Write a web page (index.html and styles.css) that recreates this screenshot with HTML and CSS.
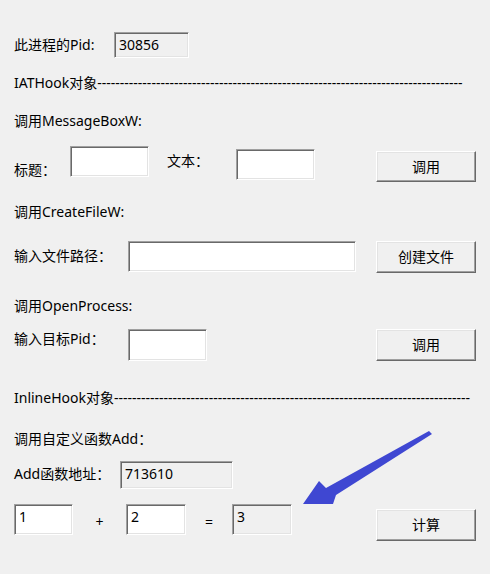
FILE: index.html
```html
<!DOCTYPE html>
<html lang="zh-CN">
<head>
<meta charset="utf-8">
<title>Hook Demo</title>
<link rel="stylesheet" href="styles.css">
</head>
<body>
<div class="dlg">
  <div class="row r1">
    <div class="lbl w100 mt3">此进程的Pid:</div>
    <div class="edit ro pid">30856</div>
  </div>
  <div class="row r2">
    <div class="lbl sep">IATHook对象---------------------------------------------------------------------------------</div>
  </div>
  <div class="row r3">
    <div class="lbl">调用MessageBoxW:</div>
  </div>
  <div class="row r4">
    <div class="lbl w56 mt14">标题：</div>
    <div class="edit e79 h31"></div>
    <div class="lbl w69 mt5 ml18">文本：</div>
    <div class="edit e79 h31 mt3"></div>
    <div class="btn h31 mt5 ml61">调用</div>
  </div>
  <div class="row r5">
    <div class="lbl">调用CreateFileW:</div>
  </div>
  <div class="row r6">
    <div class="lbl w114 mt5">输入文件路径：</div>
    <div class="edit e228 h31"></div>
    <div class="btn h32 ml20">创建文件</div>
  </div>
  <div class="row r7">
    <div class="lbl">调用OpenProcess:</div>
  </div>
  <div class="row r8">
    <div class="lbl w114">输入目标Pid：</div>
    <div class="edit e79 h32"></div>
    <div class="btn h32 ml169">调用</div>
  </div>
  <div class="row r9">
    <div class="lbl sep">InlineHook对象-------------------------------------------------------------------------------</div>
  </div>
  <div class="row r10">
    <div class="lbl">调用自定义函数Add：</div>
  </div>
  <div class="row r11">
    <div class="lbl w106 mt3">Add函数地址：</div>
    <div class="edit ro e113 h28">713610</div>
  </div>
  <div class="row r12">
    <div class="edit e59 h31">1</div>
    <div class="lbl op op1">+</div>
    <div class="edit e60 h31">2</div>
    <div class="lbl op op2">=</div>
    <div class="edit ro e60 h31">3</div>
    <div class="btn h32 mt5 ml84">计算</div>
  </div>
  <svg class="arrow" width="490" height="574" viewBox="0 0 490 574" aria-hidden="true">
    <polygon points="429,431 432,434 336,495 333,504 303,504 319,481 326,488" fill="#3f47d2"/>
  </svg>
</div>
</body>
</html>
```
FILE: styles.css
```css
html, body {
  margin: 0;
  padding: 0;
}
body {
  background: #f0f0f0;
  font-family: "Noto Sans", "Noto Sans CJK SC", sans-serif;
  font-size: 14px;
  color: #000;
}
.dlg {
  position: relative;
  width: 490px;
  height: 574px;
  padding: 0 0 0 14px;
  box-sizing: border-box;
  overflow: hidden;
}
.row {
  display: flex;
  align-items: flex-start;
}
.lbl {
  line-height: 20px;
  height: 20px;
  white-space: nowrap;
  flex: none;
}

.edit {
  box-sizing: border-box;
  flex: none;
  background: #fff;
  border-style: solid;
  border-width: 1px;
  border-color: #a0a0a0 #ffffff #ffffff #a0a0a0;
  box-shadow: inset 1px 1px 0 #696969, inset -1px -1px 0 #e3e3e3;
  padding: 2px 4px;
  line-height: 20px;
  white-space: nowrap;
}
.edit.ro { background: #f0f0f0; }
.pid { width: 75px; height: 26px; }

.btn {
  box-sizing: border-box;
  flex: none;
  width: 100px;
  background: #f0f0f0;
  border-style: solid;
  border-width: 1px;
  border-color: #ffffff #696969 #696969 #ffffff;
  box-shadow: inset -1px -1px 0 #a0a0a0, inset 1px 1px 0 #e3e3e3;
  display: flex;
  align-items: center;
  justify-content: center;
  line-height: 20px;
}

.op {
  text-align: center;
  margin-top: 8px;
}
.op1 { width: 53px; }
.op2 { width: 46px; }

/* row vertical placement */
.r1 { margin-top: 32px; height: 26px; }
.r2 { margin-top: 15px; }
.r3 { margin-top: 18px; }
.r4 { margin-top: 15px; height: 36px; }
.r5 { margin-top: 20px; }
.r6 { margin-top: 19px; height: 32px; }
.r7 { margin-top: 23px; }
.r8 { margin-top: 13px; height: 32px; }
.r9 { margin-top: 27px; }
.r10 { margin-top: 21px; }
.r11 { margin-top: 12px; height: 28px; }
.r12 { margin-top: 15px; height: 37px; }

/* widths */
.w56 { width: 56px; }
.w69 { width: 69px; }
.w100 { width: 100px; }
.w106 { width: 106px; }
.w114 { width: 114px; }
.e59 { width: 59px; }
.e60 { width: 60px; }
.e79 { width: 79px; }
.e113 { width: 113px; }
.e228 { width: 228px; }
.h28 { height: 28px; }
.h31 { height: 31px; }
.h32 { height: 32px; }

/* offsets */
.mt3 { margin-top: 3px; }
.mt5 { margin-top: 5px; }
.mt14 { margin-top: 14px; }
.ml18 { margin-left: 18px; }
.ml20 { margin-left: 20px; }
.ml61 { margin-left: 61px; }
.ml84 { margin-left: 84px; }
.ml169 { margin-left: 169px; }

.arrow {
  position: absolute;
  left: 0;
  top: 0;
  pointer-events: none;
}
```
